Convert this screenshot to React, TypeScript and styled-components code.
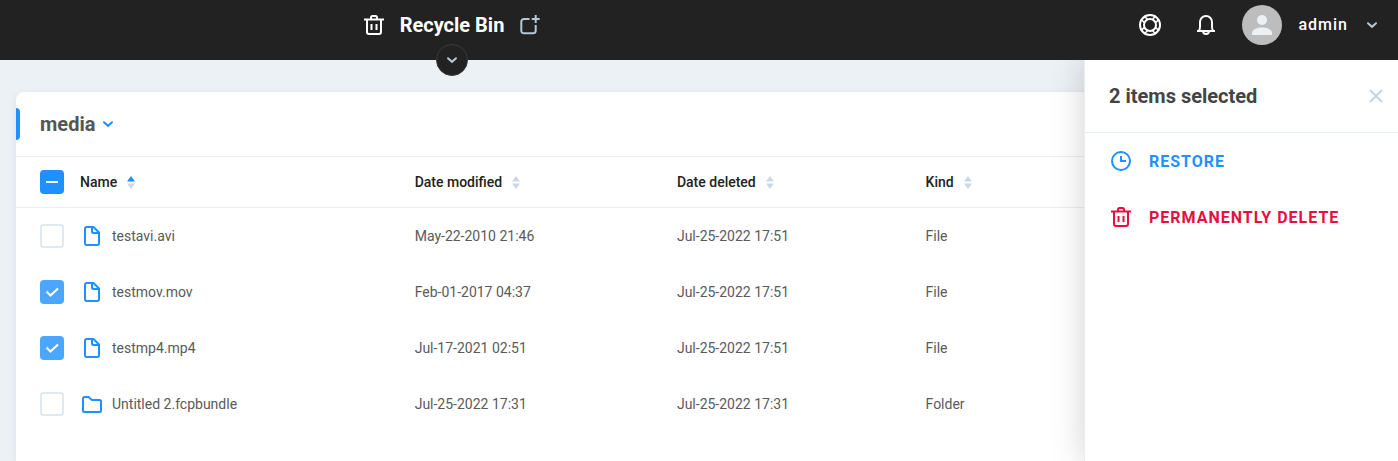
import React, { useEffect, useRef, useState } from "react";
import styled, { createGlobalStyle, css } from "styled-components";

const GlobalStyle = createGlobalStyle`
  *, *::before, *::after { box-sizing: border-box; }
  body {
    margin: 0;
    background: #ecf1f5;
    color: #5a5a5a;
    font: 400 14px/20px Roboto, "Liberation Sans", sans-serif;
  }
  button { font: inherit; color: inherit; background: none; border: 0; padding: 0; cursor: pointer; }
  svg { display: block; flex: none; }
`;

const Page = styled.div`
  position: relative;
  display: flex;
  flex-direction: column;
  min-height: 100vh;
`;

const Header = styled.header`
  position: relative;
  z-index: 2;
  display: grid;
  grid-template-columns: 904fr 494fr;
  height: 60px;
  padding-bottom: 10px;
  background: #222;
  color: #fff;
`;

const AppTitle = styled.div`
  position: relative;
  display: flex;
  align-items: center;
  justify-content: center;
  gap: 14px;
`;

const Title = styled.h1`
  margin: 0;
  font-size: 20px;
  line-height: 24px;
  font-weight: 700;
`;

const IconButton = styled.button<{ $color?: string }>`
  display: flex;
  color: ${(p) => p.$color ?? "inherit"};
`;

const IconTint = styled.span<{ $color?: string }>`
  display: flex;
  color: ${(p) => p.$color ?? "#b4c8da"};
`;

const ExpandButton = styled.button`
  position: absolute;
  bottom: -26px;
  left: 50%;
  display: grid;
  place-items: center;
  width: 32px;
  height: 32px;
  margin-left: -16px;
  border: 1px solid #3b3b3b;
  border-radius: 50%;
  background: #222;
  color: #b4c8da;
`;

const UserBar = styled.nav`
  display: flex;
  align-items: center;
  justify-content: flex-end;
  gap: 32px;
  padding-right: 18px;
`;

const UserButton = styled.button`
  display: flex;
  align-items: center;
  gap: 16px;
  margin-left: -8px;
  font-size: 16px;
  font-weight: 500;
  letter-spacing: 1px;
`;

const Avatar = styled.span`
  width: 40px;
  height: 40px;
  border-radius: 50%;
  overflow: hidden;
  background: #bdbdbd;
`;

const Main = styled.main`
  flex: 1;
  display: flex;
  padding: 32px 16px 0;
`;

const Card = styled.section`
  flex: 1;
  border-radius: 8px 8px 0 0;
  background: #fff;
  box-shadow: 0 2px 8px rgba(60, 90, 140, 0.1);
`;

const CardHead = styled.div`
  display: flex;
  align-items: center;
  height: 65px;
  border-bottom: 1px solid #e8edf1;
`;

const Marker = styled.span`
  width: 4px;
  height: 32px;
  margin-right: 20px;
  border-radius: 0 4px 4px 0;
  background: #1e90ff;
`;

const FolderButton = styled.button`
  display: flex;
  align-items: center;
  gap: 5px;
  color: #555;
  font-size: 20px;
  line-height: 24px;
  font-weight: 700;
`;

const Table = styled.table`
  width: 100%;
  table-layout: fixed;
  border-collapse: separate;
  border-spacing: 0;
  text-align: left;
`;

const Col = styled.col<{ $width?: string }>`
  width: ${(p) => p.$width ?? "auto"};
`;

const cell = css`
  padding: 0;
  vertical-align: middle;
  white-space: nowrap;
  &:first-child { padding-left: 24px; }
`;

const Th = styled.th`
  ${cell}
  height: 51px;
  border-bottom: 1px solid #eceeef;
  color: #222;
  font-weight: 500;
`;

const Td = styled.td`
  ${cell}
  height: 56px;
`;

const SortButton = styled.button`
  display: flex;
  align-items: center;
  gap: 10px;
`;

const FileName = styled.div`
  display: flex;
  align-items: center;
  gap: 8px;
`;

const CheckLabel = styled.label`
  position: relative;
  display: block;
  width: 24px;
  height: 24px;
  color: #fff;
  svg { position: absolute; inset: 0; pointer-events: none; }
`;

const CheckInput = styled.input<{ $filled?: string }>`
  appearance: none;
  display: block;
  width: 24px;
  height: 24px;
  margin: 0;
  border: 2px solid ${(p) => p.$filled ?? "#e1e9f0"};
  border-radius: 4px;
  background: ${(p) => p.$filled ?? "#fff"};
`;

const Panel = styled.aside`
  position: absolute;
  z-index: 1;
  top: 60px;
  right: 0;
  bottom: 0;
  width: 314px;
  border-left: 1px solid #e9eef2;
  background: #fff;
  box-shadow: 0 0 32px rgba(0, 0, 0, 0.18);
`;

const PanelHead = styled.div`
  display: flex;
  align-items: center;
  justify-content: space-between;
  height: 73px;
  padding: 0 10px 0 24px;
  border-bottom: 1px solid #e4edf4;
`;

const PanelTitle = styled.h2`
  margin: 0;
  color: #444;
  font-size: 20px;
  line-height: 24px;
  font-weight: 700;
`;

const Actions = styled.div`
  display: flex;
  flex-direction: column;
  align-items: flex-start;
`;

const Action = styled.button<{ $color: string }>`
  display: flex;
  align-items: center;
  gap: 16px;
  height: 56px;
  padding-left: 24px;
  color: ${(p) => p.$color};
  font-size: 16px;
  line-height: 21px;
  font-weight: 700;
  letter-spacing: 1px;
  text-transform: uppercase;
`;

type IconProps = { size?: number; children: React.ReactNode };

const Icon = ({ size = 24, children }: IconProps) => (
  <svg width={size} height={size} viewBox={`0 0 ${size} ${size}`} fill="none" stroke="currentColor" strokeWidth="2" aria-hidden="true">
    {children}
  </svg>
);

const TrashIcon = () => (
  <Icon>
    <path d="M2 6.500h20M5 6.500V19a2 2 0 0 0 2 2h10a2 2 0 0 0 2-2V6.500M9 6.500V4.500A1.500 1.500 0 0 1 10.500 3h3A1.500 1.500 0 0 1 15 4.500v2M9.500 11v6M14.500 11v6" />
  </Icon>
);

const AddWindowIcon = () => (
  <Icon>
    <path d="M11.500 6H6a2.700 2.700 0 0 0-2.700 2.700v9A2.500 2.500 0 0 0 6 20.300h9a2.700 2.700 0 0 0 2.700-2.600V12M17.700 2v8M13.700 6h8" />
  </Icon>
);

const ChevronIcon = () => (
  <Icon size={16}>
    <path strokeLinecap="round" d="M4 6.200 8 9.800 12 6.200" />
  </Icon>
);

const LifebuoyIcon = () => (
  <Icon>
    <circle cx="12" cy="12" r="10" />
    <circle cx="12" cy="12" r="6" />
    <path
      strokeWidth="1.500"
      d="M14.600 6.200 17.800 3M17.800 9.400 21 6.200M17.800 14.600 21 17.800M14.600 17.800 17.800 21M9.400 17.800 6.200 21M6.200 14.600 3 17.800M6.200 9.400 3 6.200M9.400 6.200 6.200 3"
    />
  </Icon>
);

const BellIcon = () => (
  <Icon>
    <path d="M3 18h18M4.500 18C6 17 6 16 6 14V9a6 6 0 0 1 12 0v5c0 2 0 3 1.500 4M9 18a3 3 0 0 0 6 0" />
  </Icon>
);

const FileIcon = () => (
  <Icon>
    <path d="M13.500 3H7a2 2 0 0 0-2 2v14a2 2 0 0 0 2 2h10a2 2 0 0 0 2-2V8.500ZM12 3v4.500A1.500 1.500 0 0 0 13.500 9H19" />
  </Icon>
);

const FolderIcon = () => (
  <Icon>
    <path d="M3 6.500A1.500 1.500 0 0 1 4.500 5h4L12 8h7.500A1.500 1.500 0 0 1 21 9.500v9a1.500 1.500 0 0 1-1.500 1.500h-15A1.500 1.500 0 0 1 3 18.500Z" />
  </Icon>
);

const ClockIcon = () => (
  <Icon>
    <circle cx="12" cy="12" r="9" />
    <path d="M12 7v5h5" />
  </Icon>
);

const CloseIcon = () => (
  <Icon>
    <path d="m6 6 12 12M18 6 6 18" />
  </Icon>
);

const SortIcon = ({ active }: { active?: boolean }) => (
  <svg width="8" height="14" viewBox="0 0 8 14" aria-hidden="true">
    <path d="M4 1 8 6.500H0Z" fill={active ? "#1e90ff" : "#cbd9e6"} />
    <path d="M4 14 8 8.500H0Z" fill="#cbd9e6" />
  </svg>
);

const PersonIcon = () => (
  <svg width="40" height="40" viewBox="0 0 40 40" fill="#ecf1f5" aria-hidden="true">
    <circle cx="20" cy="15" r="5" />
    <path d="M10 30v-2c0-3.500 5-5.500 10-5.500s10 2 10 5.500v2Z" />
  </svg>
);

type CheckboxProps = { label: string; checked: boolean; mixed?: boolean; onChange: () => void };

const Checkbox = ({ label, checked, mixed = false, onChange }: CheckboxProps) => {
  const ref = useRef<HTMLInputElement>(null);
  useEffect(() => {
    if (ref.current) ref.current.indeterminate = mixed;
  }, [mixed]);
  const filled = mixed ? "#1e90ff" : checked ? "#4ba6ff" : undefined;
  return (
    <CheckLabel>
      <CheckInput ref={ref} type="checkbox" aria-label={label} checked={checked} onChange={onChange} $filled={filled} />
      {filled && <Icon>{mixed ? <path d="M6 12h12" /> : <path d="m6.500 11.500 4 4 7.500-7" />}</Icon>}
    </CheckLabel>
  );
};

const columns = ["Name", "Date modified", "Date deleted", "Kind"];

const items = [
  { name: "testavi.avi", modified: "May-22-2010 21:46", deleted: "Jul-25-2022 17:51", kind: "File" },
  { name: "testmov.mov", modified: "Feb-01-2017 04:37", deleted: "Jul-25-2022 17:51", kind: "File" },
  { name: "testmp4.mp4", modified: "Jul-17-2021 02:51", deleted: "Jul-25-2022 17:51", kind: "File" },
  { name: "Untitled 2.fcpbundle", modified: "Jul-25-2022 17:31", deleted: "Jul-25-2022 17:31", kind: "Folder" },
];

export default function App() {
  const [selected, setSelected] = useState<string[]>(["testmov.mov", "testmp4.mp4"]);
  const all = selected.length === items.length;
  const toggle = (name: string) =>
    setSelected((s) => (s.includes(name) ? s.filter((n) => n !== name) : [...s, name]));

  return (
    <Page>
      <GlobalStyle />
      <Header>
        <AppTitle>
          <TrashIcon />
          <Title>Recycle Bin</Title>
          <IconButton aria-label="Open new window" $color="#b4c8da"><AddWindowIcon /></IconButton>
          <ExpandButton aria-label="Expand"><ChevronIcon /></ExpandButton>
        </AppTitle>
        <UserBar>
          <IconButton aria-label="Help"><LifebuoyIcon /></IconButton>
          <IconButton aria-label="Notifications"><BellIcon /></IconButton>
          <UserButton>
            <Avatar><PersonIcon /></Avatar>
            admin
            <IconTint><ChevronIcon /></IconTint>
          </UserButton>
        </UserBar>
      </Header>
      <Main>
        <Card>
          <CardHead>
            <Marker />
            <FolderButton>
              media
              <IconTint $color="#1e90ff"><ChevronIcon /></IconTint>
            </FolderButton>
          </CardHead>
          <Table>
            <colgroup>
              <Col $width="64px" />
              <Col $width="24.5%" />
              <Col $width="19.2%" />
              <Col $width="18.2%" />
              <Col />
            </colgroup>
            <thead>
              <tr>
                <Th>
                  <Checkbox
                    label="Select all"
                    checked={all}
                    mixed={selected.length > 0 && !all}
                    onChange={() => setSelected(all ? [] : items.map((i) => i.name))}
                  />
                </Th>
                {columns.map((c, i) => (
                  <Th key={c} aria-sort={i === 0 ? "ascending" : undefined}>
                    <SortButton>{c}<SortIcon active={i === 0} /></SortButton>
                  </Th>
                ))}
              </tr>
            </thead>
            <tbody>
              {items.map((item) => (
                <tr key={item.name}>
                  <Td>
                    <Checkbox
                      label={`Select ${item.name}`}
                      checked={selected.includes(item.name)}
                      onChange={() => toggle(item.name)}
                    />
                  </Td>
                  <Td>
                    <FileName>
                      <IconTint $color="#1e90ff">{item.kind === "Folder" ? <FolderIcon /> : <FileIcon />}</IconTint>
                      {item.name}
                    </FileName>
                  </Td>
                  <Td>{item.modified}</Td>
                  <Td>{item.deleted}</Td>
                  <Td>{item.kind}</Td>
                </tr>
              ))}
            </tbody>
          </Table>
        </Card>
      </Main>
      <Panel>
        <PanelHead>
          <PanelTitle>{selected.length} items selected</PanelTitle>
          <IconButton aria-label="Close" $color="#c3d5e4"><CloseIcon /></IconButton>
        </PanelHead>
        <Actions>
          <Action $color="#1e90ff"><ClockIcon />Restore</Action>
          <Action $color="#e60f40"><TrashIcon />Permanently delete</Action>
        </Actions>
      </Panel>
    </Page>
  );
}
